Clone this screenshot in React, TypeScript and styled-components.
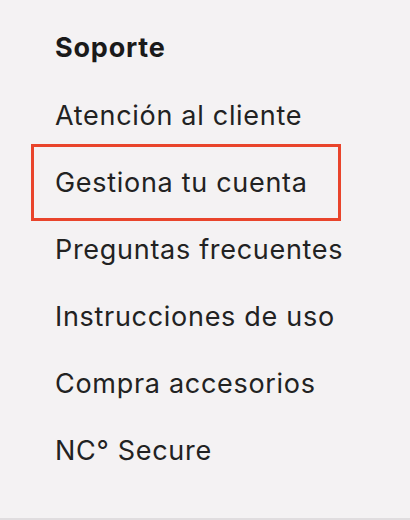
import React from 'react';
import styled, { createGlobalStyle } from 'styled-components';

const GlobalStyle = createGlobalStyle`
  html, body {
    margin: 0;
    padding: 0;
    background: #f4f2f3;
  }
  body {
    font-family: Inter, "Liberation Sans", sans-serif;
    color: #1f1f1f;
  }
`;

const Panel = styled.nav`
  box-sizing: border-box;
  height: 520px;
  padding: 35px 0 0 36px;
  background: #f4f2f3;
  border-bottom: 2px solid #e0dddf;
`;

const Title = styled.h2`
  margin: 0 0 21px 19px;
  font-size: 27px;
  line-height: 26px;
  font-weight: 700;
  letter-spacing: 0.8px;
  color: #1a1a1a;
`;

const List = styled.ul`
  list-style: none;
  margin: 0;
  padding: 0;
`;

const Link = styled.a<{ $active?: boolean }>`
  display: block;
  box-sizing: border-box;
  width: 300px;
  height: 67px;
  padding: 0 19px;
  line-height: 67px;
  font-size: 27px;
  letter-spacing: 0.7px;
  color: #222;
  text-decoration: none;
  white-space: nowrap;
  outline: ${p => (p.$active ? '3px solid #e9442b' : 'none')};
  outline-offset: 2px;
`;

const items = [
  'Atención al cliente',
  'Gestiona tu cuenta',
  'Preguntas frecuentes',
  'Instrucciones de uso',
  'Compra accesorios',
  'NC° Secure',
];

export default function App() {
  return (
    <>
      <GlobalStyle />
      <Panel>
        <Title>Soporte</Title>
        <List>
          {items.map(label => (
            <li key={label}>
              <Link href="#" $active={label === 'Gestiona tu cuenta'}>
                {label}
              </Link>
            </li>
          ))}
        </List>
      </Panel>
    </>
  );
}
